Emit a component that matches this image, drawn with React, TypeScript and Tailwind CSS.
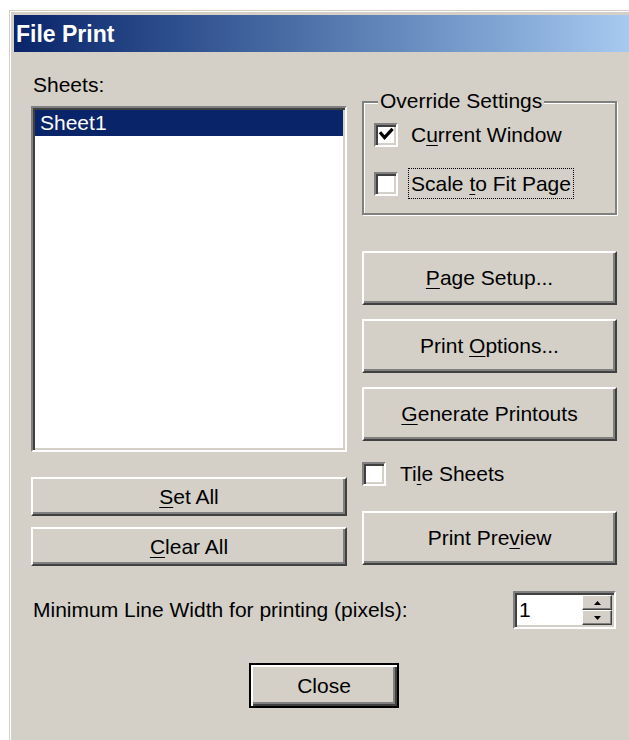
import type { ReactNode } from "react"

type ButtonProps = {
  children: ReactNode
  className?: string
}

// classic raised 3D push button
function WinButton({ children, className = "" }: ButtonProps) {
  return (
    <button
      type="button"
      className={`flex w-full items-center justify-center border-2 border-t-white border-l-white border-r-[#404040] border-b-[#404040] bg-[#d4d0c8] text-black shadow-[inset_-2px_-2px_0_#808080] ${className}`}
    >
      <span>{children}</span>
    </button>
  )
}

function Key({ children }: { children: ReactNode }) {
  return <span className="underline decoration-1 underline-offset-[3px]">{children}</span>
}

function CheckBox({ checked = false }: { checked?: boolean }) {
  return (
    <span className="flex h-[24px] w-[24px] shrink-0 border-2 border-t-[#808080] border-l-[#808080] border-r-white border-b-white bg-white shadow-[inset_2px_2px_0_#404040,inset_-2px_-2px_0_#d4d0c8]">
      {checked && (
        <svg width="20" height="20" viewBox="0 0 20 20">
          <polyline
            points="5,8.5 8.5,12.5 15.5,5"
            fill="none"
            stroke="#000"
            strokeWidth="3.2"
            strokeLinecap="square"
          />
        </svg>
      )}
    </span>
  )
}

function SpinArrow({ up }: { up?: boolean }) {
  return (
    <span className="flex flex-1 items-center justify-center border border-t-white border-l-white border-r-[#404040] border-b-[#404040] bg-[#d4d0c8] shadow-[inset_-1px_-1px_0_#808080]">
      <svg width="7" height="4" viewBox="0 0 7 4">
        <polygon points={up ? "3.5,0 7,4 0,4" : "0,0 7,0 3.5,4"} fill="#000" />
      </svg>
    </span>
  )
}

export default function App() {
  return (
    <div className="min-h-screen bg-white pl-[9px] pt-[10px] font-['Liberation_Sans',Arial,sans-serif] text-[21px] leading-[24px] text-black">
      <div className="h-[730px] border-l border-t border-[#d4d0c8]">
        <div className="h-full border-l border-t border-white bg-[#d4d0c8] pl-[3px] pt-[3px]">
          {/* title bar */}
          <div className="flex h-[37px] items-center bg-gradient-to-r from-[#0a246a] to-[#a6caf0] pl-[2px]">
            <span className="text-[23px] font-bold text-white">File Print</span>
          </div>

          <div className="flex gap-[15px] pl-[17px]">
            {/* sheets list */}
            <div className="flex w-[316px] flex-col pt-[21px]">
              <div className="h-[24px] pl-[2px]">Sheets:</div>
              <div className="mt-[9px] h-[346px] border-2 border-t-[#808080] border-l-[#808080] border-r-white border-b-white bg-white p-[2px] shadow-[inset_2px_2px_0_#404040,inset_-2px_-2px_0_#d4d0c8]">
                <div className="h-[26px] bg-[#0a246a] pl-[5px] leading-[26px] text-white">Sheet1</div>
              </div>
              <WinButton className="mt-[25px] h-[39px]">
                <Key>S</Key>et All
              </WinButton>
              <WinButton className="mt-[11px] h-[39px]">
                <Key>C</Key>lear All
              </WinButton>
            </div>

            {/* settings and actions */}
            <div className="flex w-[255px] flex-col pt-[49px]">
              <div className="relative h-[114px] border-2 border-[#808080] shadow-[inset_1px_1px_0_#fff,1px_1px_0_#fff] pl-[10px] pt-[16px]">
                <span className="absolute left-[14px] top-[-14px] bg-[#d4d0c8] px-[2px]">Override Settings</span>
                <div className="flex h-[31px] items-center gap-[13px]">
                  <CheckBox checked />
                  <span>
                    C<Key>u</Key>rrent Window
                  </span>
                </div>
                <div className="mt-[18px] flex h-[31px] items-center gap-[10px]">
                  <CheckBox />
                  <span className="h-[31px] border border-dotted border-black px-[2px] leading-[29px]">
                    Scale <Key>t</Key>o Fit Page
                  </span>
                </div>
              </div>

              <WinButton className="mt-[36px] h-[54px]">
                <Key>P</Key>age Setup...
              </WinButton>
              <WinButton className="mt-[14px] h-[54px]">
                Print <Key>O</Key>ptions...
              </WinButton>
              <WinButton className="mt-[14px] h-[54px]">
                <Key>G</Key>enerate Printouts
              </WinButton>

              <div className="mt-[21px] flex h-[24px] items-center gap-[14px]">
                <CheckBox />
                <span>
                  Ti<Key>l</Key>e Sheets
                </span>
              </div>

              <WinButton className="mt-[25px] h-[54px]">
                Print Pre<Key>v</Key>iew
              </WinButton>
            </div>
          </div>

          {/* line width */}
          <div className="ml-[17px] mt-[25px] flex w-[585px] items-center justify-between">
            <span className="pl-[2px]">Minimum Line Width for printing (pixels):</span>
            <div className="flex h-[38px] w-[103px] border-2 border-t-[#808080] border-l-[#808080] border-r-white border-b-white bg-white p-[2px] shadow-[inset_2px_2px_0_#404040,inset_-2px_-2px_0_#d4d0c8]">
              <span className="flex-1 pl-[2px] leading-[30px]">1</span>
              <div className="flex w-[30px] flex-col">
                <SpinArrow up />
                <SpinArrow />
              </div>
            </div>
          </div>

          <div className="ml-[17px] mt-[34px] flex w-[586px] justify-center">
            <div className="h-[45px] w-[150px] border-2 border-black">
              <button
                type="button"
                className="flex h-full w-full items-center justify-center bg-[#d4d0c8] shadow-[inset_2px_2px_0_#fff,inset_-2px_-2px_0_#404040,inset_-4px_-4px_0_#808080]"
              >
                Close
              </button>
            </div>
          </div>
        </div>
      </div>
    </div>
  )
}
